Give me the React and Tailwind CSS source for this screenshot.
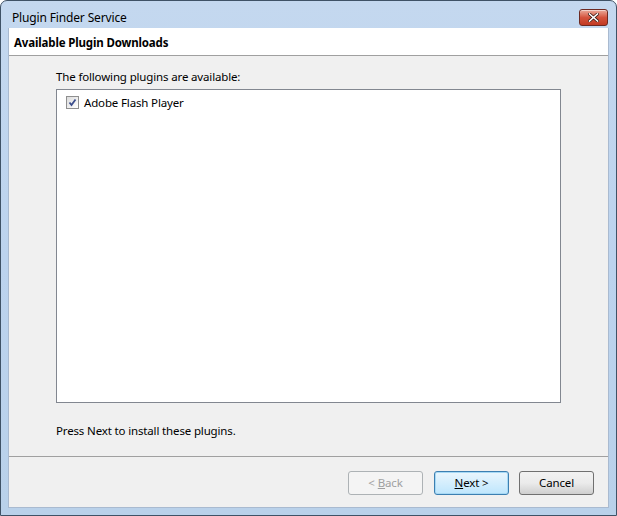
import React from 'react';

const font = { fontFamily: '"Segoe UI", "Noto Sans", "Open Sans", sans-serif' };

function CloseButton() {
  return (
    <div className="w-[29px] h-[17px] rounded-[3px] border border-[#6d2a22] bg-gradient-to-b from-[#e9a99a] via-[#d4533d] to-[#c23a22] flex items-center justify-center shadow-[inset_0_1px_0_rgba(255,255,255,0.5)]">
      <svg width="11" height="9" viewBox="0 0 11 9">
        <path d="M1.5 1 L9.5 8 M9.5 1 L1.5 8" stroke="#3a1a14" strokeWidth="3" strokeLinecap="square" />
        <path d="M1.5 1 L9.5 8 M9.5 1 L1.5 8" stroke="#ffffff" strokeWidth="1.6" strokeLinecap="square" />
      </svg>
    </div>
  );
}

function Button({ children, disabled, focused }) {
  return (
    <div
      className={`w-[75px] h-[24px] rounded-[3px] flex items-center justify-center ${
        disabled
          ? 'border border-[#adb2b5] bg-[#f4f4f4] text-[#a0a0a0]'
          : focused
          ? 'border border-[#3c7fb1] bg-gradient-to-b from-[#eaf6fd] to-[#bee6fd] text-black shadow-[inset_0_0_0_1px_#a7d9f5]'
          : 'border border-[#707070] bg-gradient-to-b from-[#f2f2f2] via-[#ebebeb] to-[#cfcfcf] text-black'
      }`}
    >
      {children}
    </div>
  );
}

export default function App() {
  return (
    <div style={font} className="w-[617px] h-[516px] bg-white text-[11.5px] tracking-[-0.15px] text-black">
      <div className="w-full h-full flex flex-col border border-[#3f5266] rounded-t-[7px] bg-gradient-to-b from-[#c4d8ef] via-[#bcd3ee] to-[#b9d1ea]">
        {/* Title bar */}
        <div className="h-[27px] flex items-start justify-between pl-[11px] pr-[8px] pt-[7px]">
          <span className="leading-[18px] text-[12px] mt-[1px]">Plugin Finder Service</span>
          <div className="mt-[1px]">
            <CloseButton />
          </div>
        </div>

        {/* Client */}
        <div className="flex-1 mx-[7px] mb-[7px] flex flex-col bg-[#f0f0f0] border border-[#a9bad0] border-t-0">
          <div className="h-[28px] bg-white border-b border-[#a0a0a0] flex items-center pl-[5px] pt-[2px]">
            <span className="font-bold">Available Plugin Downloads</span>
          </div>

          <div className="flex-1 flex flex-col pl-[47px] pr-[47px]">
            <div className="h-[33px] flex items-center pt-[8px]">
              <span>The following plugins are available:</span>
            </div>
            <div className="h-[314px] bg-white border border-[#828790] px-[9px] pt-[4px]">
              <div className="flex items-center gap-[5px]">
                <div className="w-[13px] h-[13px] border border-[#8f8f8f] bg-gradient-to-br from-[#dcdcdc] to-[#ffffff] flex items-center justify-center">
                  <svg width="9" height="9" viewBox="0 0 9 9">
                    <path d="M1.5 4.5 L3.5 7 L7.5 1.5" stroke="#3b4d8c" strokeWidth="1.8" fill="none" />
                  </svg>
                </div>
                <span>Adobe Flash Player</span>
              </div>
            </div>
            <div className="flex-1 flex items-center pt-[3px]">
              <span>Press Next to install these plugins.</span>
            </div>
          </div>

          <div className="h-[51px] border-t border-[#a0a0a0] flex items-center justify-end gap-[10px] pr-[14px] pt-[1px]">
            <div className="mr-[1px]">
              <Button disabled>
                &lt; <span className="underline ml-[3px]">B</span>ack
              </Button>
            </div>
            <Button focused>
              <span className="underline">N</span>ext &gt;
            </Button>
            <Button>Cancel</Button>
          </div>
        </div>
      </div>
    </div>
  );
}
